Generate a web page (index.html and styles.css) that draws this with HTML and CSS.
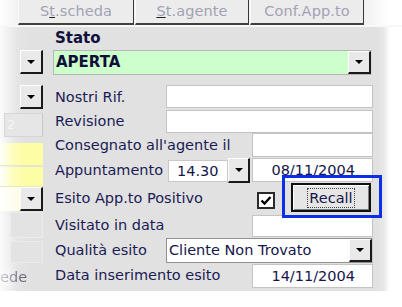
FILE: index.html
```html
<!DOCTYPE html>
<html>
<head>
<meta charset="utf-8">
<title>Stato</title>
<link rel="stylesheet" href="styles.css">
</head>
<body>
<div class="screen">
  <div class="toolbar">
    <div class="tbtn tbtn-first">S<u>t</u>.scheda</div>
    <div class="tbtn"><u>S</u>t.agente</div>
    <div class="tbtn">Conf.App.to</div>
  </div>
  <div class="panel">
    <div class="leftcol">
      <div class="ddbtn lc-dd lc-dd1"><span class="arrow"></span></div>
      <div class="ddbtn lc-dd lc-dd2"><span class="arrow"></span></div>
      <div class="lc-grey">2</div>
      <div class="lc-yellow lc-y1"></div>
      <div class="lc-yellow lc-y2"></div>
      <div class="lc-combo"><div class="ddbtn"><span class="arrow"></span></div></div>
      <div class="lc-empty lc-e1"></div>
      <div class="lc-empty lc-e2"></div>
      <div class="lc-text">ede</div>
    </div>
    <div class="form">
      <div class="stato-label">Stato</div>
      <div class="combo green"><span class="val bold">APERTA</span><div class="ddbtn"><span class="arrow"></span></div></div>

      <div class="row r24">
        <div class="lbl">Nostri Rif.</div>
        <div class="box span-bc"></div>
      </div>
      <div class="row r24">
        <div class="lbl">Revisione</div>
        <div class="box span-bc mt1"></div>
      </div>
      <div class="row r25">
        <div class="lbl span-ab">Consegnato all'agente il</div>
        <div class="box col-c"></div>
      </div>
      <div class="row r25">
        <div class="lbl">Appuntamento</div>
        <div class="timecombo"><span class="val">14.30</span><div class="ddbtn"><span class="arrow"></span></div></div>
        <div class="box col-c right">08/11/2004</div>
      </div>
      <div class="row r30">
        <div class="lbl span-ab">Esito App.to Positivo</div>
        <div class="esito">
          <div class="check"><svg width="14" height="14" viewBox="0 0 14 14"><path d="M2.5 6.5 L5.5 9.5 L11.5 3" fill="none" stroke="#000" stroke-width="2.4"/></svg></div>
          <div class="recall"><span class="focus">Recall</span></div>
        </div>
      </div>
      <div class="row r25">
        <div class="lbl span-ab">Visitato in data</div>
        <div class="box col-c mt2 h22"></div>
      </div>
      <div class="row r25">
        <div class="lbl">Qualità esito</div>
        <div class="combo qcombo span-bc"><span class="val">Cliente Non Trovato</span><div class="ddbtn"><span class="arrow"></span></div></div>
      </div>
      <div class="row r25">
        <div class="lbl span-ab">Data inserimento esito</div>
        <div class="box col-c mt1 right">14/11/2004</div>
      </div>
    </div>
  </div>
  <div class="annot"></div>
</div>
</body>
</html>
```

FILE: styles.css
```css
* { box-sizing: border-box; }

body {
  margin: 0;
  background: #ffffff;
  font-family: "DejaVu Sans", "Liberation Sans", sans-serif;
  font-size: 14.5px;
  color: #1b1b55;
}

.screen {
  position: relative;
  width: 402px;
  height: 307px;
  overflow: hidden;
  background: #ffffff;
}

/* ---------- top buttons ---------- */
.toolbar {
  height: 25px;
  display: flex;
  padding-left: 18px;
  background: linear-gradient(to right, #ffffff 0, #f1f1f1 18px, #f1f1f1 364px, #ffffff 390px);
}

.tbtn {
  width: 114px;
  margin-left: 1px;
  height: 25px;
  background: #ececec;
  border-left: 1px solid #fafafa;
  border-right: 1px solid #383838;
  border-bottom: 2px solid #404040;
  color: #a2a2b4;
  text-align: center;
  line-height: 23px;
  letter-spacing: 0.1px;
}

.tbtn-first {
  width: 116px;
  margin-left: 0;
}

.tbtn u {
  text-decoration-color: #202020;
}

/* ---------- panel ---------- */
.panel {
  display: flex;
  width: 402px;
  height: 266px;
  border-top: 2px solid #f8f8f8;
  background: linear-gradient(to right, #e1e1e1 0, #e1e1e1 376px, #e6e6e6 383px, #ffffff 390px);
}

.leftcol {
  width: 48px;
  padding-top: 23px;
  display: flex;
  flex-direction: column;
  background: linear-gradient(to right, #fbfbfb 0, #e4e4e4 18px, #e1e1e1 30px);
}

.ddbtn {
  width: 23px;
  height: 24px;
  background: #e9e9e9;
  border-top: 1px solid #fdfdfd;
  border-left: 1px solid #fdfdfd;
  border-right: 2px solid #1a1a1a;
  border-bottom: 2px solid #1a1a1a;
  display: flex;
  align-items: center;
  justify-content: center;
  flex: none;
}

.arrow {
  width: 0;
  height: 0;
  border-left: 4px solid transparent;
  border-right: 4px solid transparent;
  border-top: 4px solid #000;
}

.lc-dd { margin-left: 20px; }
.lc-dd2 { margin-top: 11px; }

.lc-grey {
  margin-top: 4px;
  margin-left: 4px;
  width: 39px;
  height: 24px;
  border: 1px solid #d6d6d6;
  border-right-color: #c8c8c8;
  background: #e6e6e6;
  color: #f4f4f4;
  font-size: 13px;
  line-height: 22px;
  padding-left: 2px;
}

.lc-yellow {
  width: 43px;
  background: linear-gradient(to right, #ffffff 0, #fdfdc0 12px, #fdfda6 24px);
  border-bottom: 1px solid #e8e8c0;
}
.lc-y1 { margin-top: 6px; height: 23px; }
.lc-y2 { margin-top: 1px; height: 20px; }

.lc-combo {
  width: 43px;
  height: 24px;
  display: flex;
  justify-content: flex-end;
  background: linear-gradient(to right, #ffffff 0, #fdfde6 20px);
}

.lc-empty {
  margin-left: 10px;
  width: 33px;
  border: 1px solid #ececec;
  background: #e3e3e3;
}
.lc-e1 { margin-top: 1px; height: 26px; }
.lc-e2 { margin-top: 3px; height: 22px; }

.lc-text {
  margin-top: 5px;
  color: #6a6a80;
  line-height: 18px;
  padding-left: 0;
  background: linear-gradient(to right, #ffffff 0, rgba(225,225,225,0) 14px);
  -webkit-mask-image: linear-gradient(to right, rgba(0,0,0,0.25) 0, #000 22px);
  mask-image: linear-gradient(to right, rgba(0,0,0,0.25) 0, #000 22px);
}

/* ---------- form ---------- */
.form {
  width: 320px;
  margin-left: 5px;
  display: flex;
  flex-direction: column;
}

.stato-label {
  height: 23px;
  line-height: 23px;
  padding-left: 2px;
  font-weight: bold;
  font-size: 15px;
  color: #10103a;
}

.combo {
  display: flex;
  align-items: stretch;
  justify-content: space-between;
  border: 1px solid #b6b6b6;
  border-right-color: #d8d8d8;
}

.combo .ddbtn {
  height: auto;
}

.green {
  height: 25px;
  background: #ccffcc;
  margin-right: 1px;
}

.val {
  padding-left: 2px;
  line-height: 22px;
  color: #15154a;
  white-space: nowrap;
}

.bold {
  font-weight: bold;
  font-size: 15px;
  color: #0e0e36;
}

.row {
  display: grid;
  grid-template-columns: 113px 86px 121px;
}

.row:first-of-type { }

.r24 { height: 24px; }
.r25 { height: 25px; }
.r30 { height: 30px; }

.form .row:nth-child(3) { margin-top: 10px; }

.lbl {
  padding-left: 2px;
  line-height: 24px;
  white-space: nowrap;
}

.r30 .lbl { line-height: 30px; }

.span-ab { grid-column: 1 / 3; }
.span-bc { grid-column: 2 / 4; }
.col-c { grid-column: 3 / 4; }

.box {
  background: #ffffff;
  border: 1px solid #c4c4c4;
  height: 24px;
  line-height: 22px;
  color: #15154a;
}

.right {
  text-align: right;
  padding-right: 17px;
}

.mt1 { margin-top: 1px; }
.mt2 { margin-top: 2px; }
.h22 { height: 22px; }

.r24 .box { height: 23px; }

.timecombo {
  grid-column: 2 / 3;
  margin-left: 2px;
  width: 82px;
  height: 25px;
  display: flex;
  align-items: flex-start;
}

.timecombo .val {
  width: 60px;
  height: 22px;
  margin-top: 2px;
  background: #ffffff;
  border: 1px solid #c8c8c8;
  padding-left: 8px;
  line-height: 20px;
}

.timecombo .ddbtn {
  width: 22px;
  height: 25px;
}

.esito {
  grid-column: 3 / 4;
  display: flex;
  align-items: flex-start;
}

.check {
  margin-left: 5px;
  margin-top: 9px;
  width: 18px;
  height: 17px;
  background: #ffffff;
  border: 2px solid #2a2a2a;
  display: flex;
  align-items: center;
  justify-content: center;
}

.recall {
  margin-left: 16px;
  width: 80px;
  height: 29px;
  background: #e6e6e6;
  border: 2px solid #101010;
  box-shadow: inset 1px 1px 0 #ffffff, inset -1px -1px 0 #808080;
  display: flex;
  align-items: center;
  justify-content: center;
}

.focus {
  outline: 1px dotted #404040;
  outline-offset: 0;
  padding: 0 1px;
  line-height: 18px;
  color: #15154a;
}

.qcombo {
  height: 25px;
  background: #ffffff;
  border: 1px solid #909090;
  border-right-color: #c8c8c8;
}

.qcombo .val {
  padding-left: 2px;
}

/* annotation frame drawn over the screenshot */
.annot {
  position: absolute;
  left: 282px;
  top: 175px;
  width: 100px;
  height: 43px;
  border: 3px solid #0b2fe6;
}
```
